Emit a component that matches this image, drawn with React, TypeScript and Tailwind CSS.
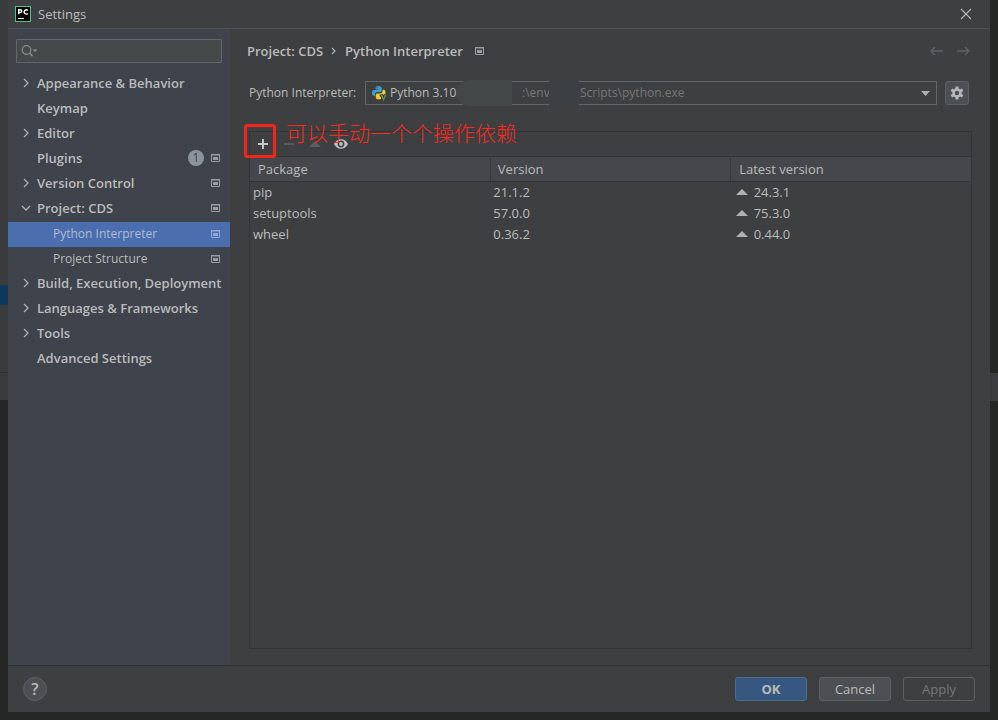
import React from 'react';

interface NavItem {
  label: string;
  arrow?: 'right' | 'down';
  child?: boolean;
  badge?: number;
  scoped?: boolean;
  selected?: boolean;
}

const navItems: NavItem[] = [
  { label: 'Appearance & Behavior', arrow: 'right' },
  { label: 'Keymap' },
  { label: 'Editor', arrow: 'right' },
  { label: 'Plugins', badge: 1, scoped: true },
  { label: 'Version Control', arrow: 'right', scoped: true },
  { label: 'Project: CDS', arrow: 'down', scoped: true },
  { label: 'Python Interpreter', child: true, scoped: true, selected: true },
  { label: 'Project Structure', child: true, scoped: true },
  { label: 'Build, Execution, Deployment', arrow: 'right' },
  { label: 'Languages & Frameworks', arrow: 'right' },
  { label: 'Tools', arrow: 'right' },
  { label: 'Advanced Settings' },
];

const packages = [
  { name: 'pip', version: '21.1.2', latest: '24.3.1' },
  { name: 'setuptools', version: '57.0.0', latest: '75.3.0' },
  { name: 'wheel', version: '0.36.2', latest: '0.44.0' },
];

const PyCharmLogo = () => (
  <svg width="16" height="16" viewBox="0 0 16 16" className="shrink-0">
    <rect width="16" height="16" fill="#3fc495" />
    <rect x="1" y="1" width="14" height="14" fill="#050505" />
    <path d="M3.700 8.200V3.700h1.600a1.400 1.400 0 0 1 0 2.800H3.700M12.800 4.400a2.100 2.100 0 1 0 0 3" fill="none" stroke="#fff" strokeWidth="1.400" />
    <path d="M3 12.500h6" stroke="#fff" strokeWidth="1.100" />
  </svg>
);

// Small window glyph shown next to project-level settings
const ScopeIcon = () => (
  <svg width="9" height="8" viewBox="0 0 9 8" className="shrink-0">
    <path d="M.5 .5h8v7h-8z" fill="none" stroke="currentColor" />
    <path d="M0 0h9v1.5H0zM2 3h5v3H2z" fill="currentColor" />
  </svg>
);

const Chevron = ({ dir }: { dir: 'right' | 'down' }) => (
  <svg width="10" height="10" viewBox="0 0 10 10" fill="none" stroke="#afb1b3" strokeWidth="1.3">
    <path d={dir === 'right' ? 'M3 1l4 4-4 4' : 'M1 3l4 4 4-4'} />
  </svg>
);

const PythonIcon = () => (
  <svg width="16" height="16" viewBox="0 0 16 16" className="shrink-0">
    <path d="M7.2 1C5 1 4.6 2 4.6 3v1.5h3.2V5H3C1.700 5 1 6.200 1 7.900s.7 2.800 1.900 2.800h1.200V9.100c0-1.200.9-2 2.100-2h2.800c1 0 1.700-.7 1.700-1.700V3c0-1.300-1.300-2-3.500-2z" fill="#3e9fd0" />
    <path d="M8 14.500c-2.200 0-3.200-.7-3.200-1.900v-2.500c0-1 .7-1.700 1.700-1.700h2.900c1.200 0 2.100-.9 2.100-2.100V4.700h1.100c1.300 0 2 1.200 2 2.900 0 .9-.2 1.600-.6 2.100H8v.6h2.400v2.300c0 1.200-.7 1.900-2.400 1.900z" fill="#f7c72c" />
    <circle cx="6.100" cy="2.800" r=".6" fill="#3d3f41" />
    <path d="M10 9.500l2.500 5 2.500-5" fill="none" stroke="#3d3f41" strokeWidth="3" />
    <path d="M10.300 9.800l2.200 4.800 2.200-4.800" fill="none" stroke="#5fa044" strokeWidth="1.300" />
  </svg>
);

const GearIcon = () => (
  <svg width="14" height="14" viewBox="0 0 14 14">
    <g fill="#b4b8ba">
      <circle cx="7" cy="7" r="4.700" />
      <rect x="5.500" y=".5" width="3" height="13" rx=".5" />
      <rect x="5.500" y=".5" width="3" height="13" rx=".5" transform="rotate(60 7 7)" />
      <rect x="5.500" y=".5" width="3" height="13" rx=".5" transform="rotate(120 7 7)" />
    </g>
    <circle cx="7" cy="7" r="2.200" fill="#4c5052" />
  </svg>
);

const Sidebar = () => (
  <nav aria-label="Settings" className="w-[222px] shrink-0 bg-[#3e434c] pt-2.5">
    <div className="relative mx-2 mb-[9px]">
      <input
        type="search"
        aria-label="Search settings"
        className="block h-6 w-full rounded-[1px] border border-[#646769] bg-[#45494a] pl-7 pr-2 outline-none"
      />
      <svg width="18" height="14" viewBox="0 0 18 14" fill="none" className="pointer-events-none absolute left-[5px] top-[5px]">
        <circle cx="5.500" cy="6" r="4.300" stroke="#8a8d8f" strokeWidth="1.200" />
        <path d="M8.600 9.100l3 3" stroke="#8a8d8f" strokeWidth="1.500" />
        <path d="M11.500 5.500h5L14 8z" fill="#8a8d8f" />
      </svg>
    </div>
    <ul>
      {navItems.map((item) => (
        <li key={item.label}>
          <button
            className={`flex h-[25px] w-full items-center pr-2.5 text-left ${item.child ? 'pb-px' : 'pb-[3px]'} ${
              item.selected ? 'bg-[#4b6eaf] text-[#afbbd0]' : 'text-[#bbbbbb]'
            }`}
          >
            <span className={`flex shrink-0 pl-[13px] ${item.child ? 'w-[45px]' : 'w-[29px]'}`}>
              {item.arrow && <Chevron dir={item.arrow} />}
            </span>
            <span className={`flex-1 whitespace-nowrap ${item.child ? 'text-xs' : 'font-semibold'}`}>{item.label}</span>
            {item.badge && (
              <span className="mr-[7px] flex size-4 items-center justify-center rounded-full bg-[#8a949c] text-xs text-[#3e434c]">
                {item.badge}
              </span>
            )}
            {item.scoped && (
              <span className={item.selected ? 'text-[#8fa8d2]' : 'text-[#9a9da1]'}>
                <ScopeIcon />
              </span>
            )}
          </button>
        </li>
      ))}
    </ul>
  </nav>
);

const InterpreterRow = () => (
  <div className="mt-[21px] flex items-center pl-[2px] pr-[5px] text-xs">
    <label htmlFor="interpreter" className="w-[116px] shrink-0 whitespace-nowrap">
      Python Interpreter:
    </label>
    <div className="relative h-6 flex-1">
      <select
        id="interpreter"
        className="h-6 w-full appearance-none border border-[#646769] bg-[#3d3f41] pl-6 text-[#bbbbbb] outline-none"
      >
        <option>Python 3.10</option>
      </select>
      <div className="pointer-events-none absolute inset-0 flex items-center pl-1.5 pr-[7px]">
        <PythonIcon />
        {/* Redacted part of the interpreter name */}
        <span className="ml-[69px] h-[26px] w-[56px] rounded-l-full bg-[#434748]" />
        <span className="w-[37px] pl-2.5 text-[#787878]">:\env</span>
        <span className="h-[26px] w-[30px] bg-[#3d4042]" />
        <span className="flex-1 pl-px text-[#787878]">Scripts\python.exe</span>
        <svg width="9" height="5" viewBox="0 0 9 5">
          <path d="M0 0h9L4.500 5z" fill="#afb1b3" />
        </svg>
      </div>
    </div>
    <button
      aria-label="Interpreter options"
      className="ml-2 flex size-6 items-center justify-center rounded-[3px] border border-[#5e6060] bg-[#4c5052]"
    >
      <GearIcon />
    </button>
  </div>
);

const PackagePanel = () => (
  <section className="relative ml-[2px] mr-[2px] mt-[26px] flex flex-1 flex-col border border-[#323436]">
    <div className="flex h-6 items-center pl-[5px]">
      <button aria-label="Install package" className="flex w-4 justify-center">
        <svg width="12" height="12" viewBox="0 0 12 12" stroke="#c4c6c8" strokeWidth="2">
          <path d="M6 1v10M1 6h10" />
        </svg>
      </button>
      <button aria-label="Uninstall package" className="ml-2.5 flex w-4 justify-center">
        <svg width="10" height="12" viewBox="0 0 10 12" stroke="#585b5d" strokeWidth="2">
          <path d="M0 6h10" />
        </svg>
      </button>
      <button aria-label="Upgrade package" className="ml-2.5 flex w-4 justify-center">
        <svg width="12" height="12" viewBox="0 0 12 12">
          <path d="M0 9h12L6 3z" fill="#5b5e60" />
        </svg>
      </button>
      <button aria-label="Show early releases" className="ml-2.5 flex w-4 justify-center">
        <svg width="14" height="12" viewBox="0 0 14 12">
          <path d="M0 6c1.500-3 4-4.700 7-4.700S12.500 3 14 6c-1.500 3-4 4.700-7 4.700S1.500 9 0 6z" fill="#bfc1c3" />
          <circle cx="7" cy="6" r="3.400" fill="#3d3f41" />
          <circle cx="7" cy="6" r="1.900" fill="#bfc1c3" />
        </svg>
      </button>
    </div>
    <table className="w-full table-fixed border-collapse text-left">
      <colgroup>
        <col className="w-1/3" />
        <col className="w-1/3" />
        <col className="w-1/3" />
      </colgroup>
      <thead>
        <tr className="h-[25px] border-y border-[#323436] bg-[#45474a]">
          <th className="border-r border-[#36383a] pl-2 font-normal">Package</th>
          <th className="border-r border-[#36383a] pl-[7px] font-normal">Version</th>
          <th className="pl-2 font-normal">Latest version</th>
        </tr>
      </thead>
      <tbody>
        {packages.map((p) => (
          <tr key={p.name} className="h-[21px]">
            <td className="pl-[3px]">{p.name}</td>
            <td className="pl-[3px]">{p.version}</td>
            <td className="pl-[5px]">
              <span className="flex items-center gap-1.5">
                <svg width="12" height="6" viewBox="0 0 12 6">
                  <path d="M0 6h12L6 0z" fill="#afb1b3" />
                </svg>
                {p.latest}
              </span>
            </td>
          </tr>
        ))}
      </tbody>
    </table>

    {/* Red marker and note over the toolbar */}
    <div className="pointer-events-none absolute -left-1.5 -top-2 h-[34px] w-8 rounded-[3px] border-3 border-[#f4261c]" />
    <p className="pointer-events-none absolute -top-3.5 left-9 whitespace-nowrap font-['Noto_Sans_CJK_SC',sans-serif] text-[21px] font-light leading-7 text-[#fa2a20]">
      可以手动一个个操作依赖
    </p>
  </section>
);

const App: React.FC = () => {
  return (
    <div className="flex min-h-screen bg-[#252626] font-['Open_Sans','Noto_Sans_CJK_SC',sans-serif] text-[13px] leading-[18px] text-[#bbbbbb]">
      {/* Editor window behind the dialog */}
      <div className="flex w-2 shrink-0 flex-col">
        <div className="h-[285px] bg-[#393b3c]" />
        <div className="h-5 bg-[#0d385c]" />
        <div className="h-[68px] border-b border-[#2e3031] bg-[#393b3c]" />
        <div className="h-[27px] bg-[#393b3c]" />
      </div>

      <div className="mb-2 flex flex-1 flex-col bg-[#3d3f41]">
        <header className="flex h-[29px] items-center border-b border-[#505355] pl-[7px] pr-[18px]">
          <PyCharmLogo />
          <h1 className="ml-[7px] flex-1">Settings</h1>
          <button aria-label="Close">
            <svg width="12" height="12" viewBox="0 0 12 12" stroke="#b4b6b8" strokeWidth="1.100">
              <path d="M1 1l10 10M11 1L1 11" />
            </svg>
          </button>
        </header>

        <div className="flex flex-1">
          <Sidebar />
          <main className="flex flex-1 flex-col pb-4 pl-[17px] pr-4 pt-[13px]">
            <div className="flex h-[18px] items-center pr-1 font-semibold">
              <span>Project: CDS</span>
              <svg width="6" height="8" viewBox="0 0 6 8" fill="none" stroke="#afb1b3" strokeWidth="1.200" className="mx-2">
                <path d="M1 1l3 3-3 3" />
              </svg>
              <span>Python Interpreter</span>
              <span className="ml-3 flex-1 text-[#9a9da1]">
                <ScopeIcon />
              </span>
              <button aria-label="Back" className="mr-3.5">
                <svg width="13" height="10" viewBox="0 0 13 10" fill="none" stroke="#5f6264" strokeWidth="1.400">
                  <path d="M13 5H1M5 1L1 5l4 4" />
                </svg>
              </button>
              <button aria-label="Forward">
                <svg width="13" height="10" viewBox="0 0 13 10" fill="none" stroke="#5f6264" strokeWidth="1.400">
                  <path d="M0 5h12M8 1l4 4-4 4" />
                </svg>
              </button>
            </div>
            <InterpreterRow />
            <PackagePanel />
          </main>
        </div>

        <footer className="flex h-[47px] items-center gap-3 border-t border-[#2f3133] pl-[15px] pr-[15px]">
          <button
            aria-label="Help"
            className="mr-auto flex size-6 items-center justify-center rounded-full border border-[#5e6060] bg-[#4c5052] text-base font-semibold"
          >
            ?
          </button>
          <button className="h-6 w-[72px] rounded-[3px] border border-[#4c708c] bg-[#365880] font-bold">OK</button>
          <button className="h-6 w-[72px] rounded-[3px] border border-[#5e6060] bg-[#4c5052]">Cancel</button>
          <button disabled className="h-6 w-[72px] rounded-[3px] border border-[#5e6060] text-[#777777]">
            Apply
          </button>
        </footer>
      </div>

      <div className="flex w-2 shrink-0 flex-col pt-[373px]">
        <div className="h-7 bg-[#3a3c3d]" />
      </div>
    </div>
  );
};

export default App;
